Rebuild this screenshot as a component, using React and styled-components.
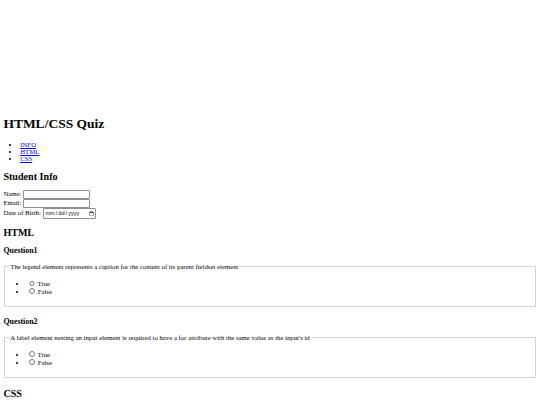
import React from 'react'
import styled, { createGlobalStyle } from 'styled-components'

// the page is drawn at a 1280px layout, shrunk to the 540px window
const S = 0.421875
const px = (v) => `${(v * S).toFixed(3)}px`

const GlobalStyle = createGlobalStyle`
  body {
    margin: ${px(8)};
    background: #fff;
    color: #000;
    font-family: "Liberation Serif", "Times New Roman", serif;
    font-size: ${px(16)};
  }
`

const Header = styled.header`
  padding-top: ${px(246)};
`

const Title = styled.h1`
  font-size: ${px(32)};
  font-weight: bold;
  margin: ${px(21.44)} 0;
`

const SectionTitle = styled.h2`
  font-size: ${px(24)};
  font-weight: bold;
  margin: ${px(19.92)} 0;
`

const QuestionBlock = styled.div`
  padding-bottom: ${px(6)};
`

const QuestionTitle = styled.h3`
  font-size: ${px(18.72)};
  font-weight: bold;
  margin: ${px(18.72)} 0;
`

const List = styled.ul`
  margin: ${px(16)} 0;
  padding-left: ${px(40)};
  list-style: disc;

  a {
    color: #0000ee;
    text-decoration: underline;
  }
`

const Row = styled.div`
  display: block;
  line-height: normal;
`

const Field = styled.input`
  font-family: "Liberation Sans", Arial, sans-serif;
  font-size: ${px(13.333)};
  width: ${(p) => (p.type === 'date' ? px(118) : px(149))};
  padding: ${px(1)} ${px(2)};
  margin: 0;
  border: 1px solid #8f8f8f;
  border-radius: 1px;
  vertical-align: baseline;
  background: #fff;
  color: #000;

  &::-webkit-calendar-picker-indicator {
    width: ${px(12)};
    height: ${px(12)};
    padding: 0;
    margin-left: ${px(4)};
  }
`

const Fieldset = styled.fieldset`
  margin: 0 ${px(2)};
  padding: ${px(5.6)} ${px(12)} ${px(10)};
  border: 1px solid #d3d3d3;
`

const Legend = styled.legend`
  padding: 0 ${px(2)};
  margin-left: ${px(-2)};
`

const Radio = styled.input`
  width: ${px(13)};
  height: ${px(13)};
  margin: ${px(3)} ${px(3)} 0 ${px(5)};
  vertical-align: baseline;
`

const questions = [
  {
    id: 'q1',
    title: 'Question1',
    text: 'The legend element represents a caption for the content of its parent fieldset element',
  },
  {
    id: 'q2',
    title: 'Question2',
    text: "A label element nesting an input element is required to have a for attribute with the same value as the input's id",
  },
]

function Question({ q }) {
  return (
    <QuestionBlock>
      <QuestionTitle>{q.title}</QuestionTitle>
      <Fieldset>
        <Legend>{q.text}</Legend>
        <List>
          <li>
            <label>
              <Radio type="radio" name={q.id} value="true" /> True
            </label>
          </li>
          <li>
            <label>
              <Radio type="radio" name={q.id} value="false" /> False
            </label>
          </li>
        </List>
      </Fieldset>
    </QuestionBlock>
  )
}

export default function App() {
  return (
    <>
      <GlobalStyle />
      <Header>
        <Title>HTML/CSS Quiz</Title>
        <nav>
          <List>
            <li><a href="#student-info">INFO</a></li>
            <li><a href="#html-questions">HTML</a></li>
            <li><a href="#css-questions">CSS</a></li>
          </List>
        </nav>
      </Header>
      <main>
        <form>
          <section id="student-info">
            <SectionTitle>Student Info</SectionTitle>
            <Row>
              <label htmlFor="name">Name:</label> <Field id="name" type="text" />
            </Row>
            <Row>
              <label htmlFor="email">Email:</label> <Field id="email" type="email" />
            </Row>
            <Row>
              <label htmlFor="birth-date">Date of Birth:</label> <Field id="birth-date" type="date" />
            </Row>
          </section>
          <section id="html-questions">
            <SectionTitle>HTML</SectionTitle>
            {questions.map((q) => (
              <Question key={q.id} q={q} />
            ))}
          </section>
          <section id="css-questions">
            <SectionTitle>CSS</SectionTitle>
          </section>
        </form>
      </main>
    </>
  )
}
